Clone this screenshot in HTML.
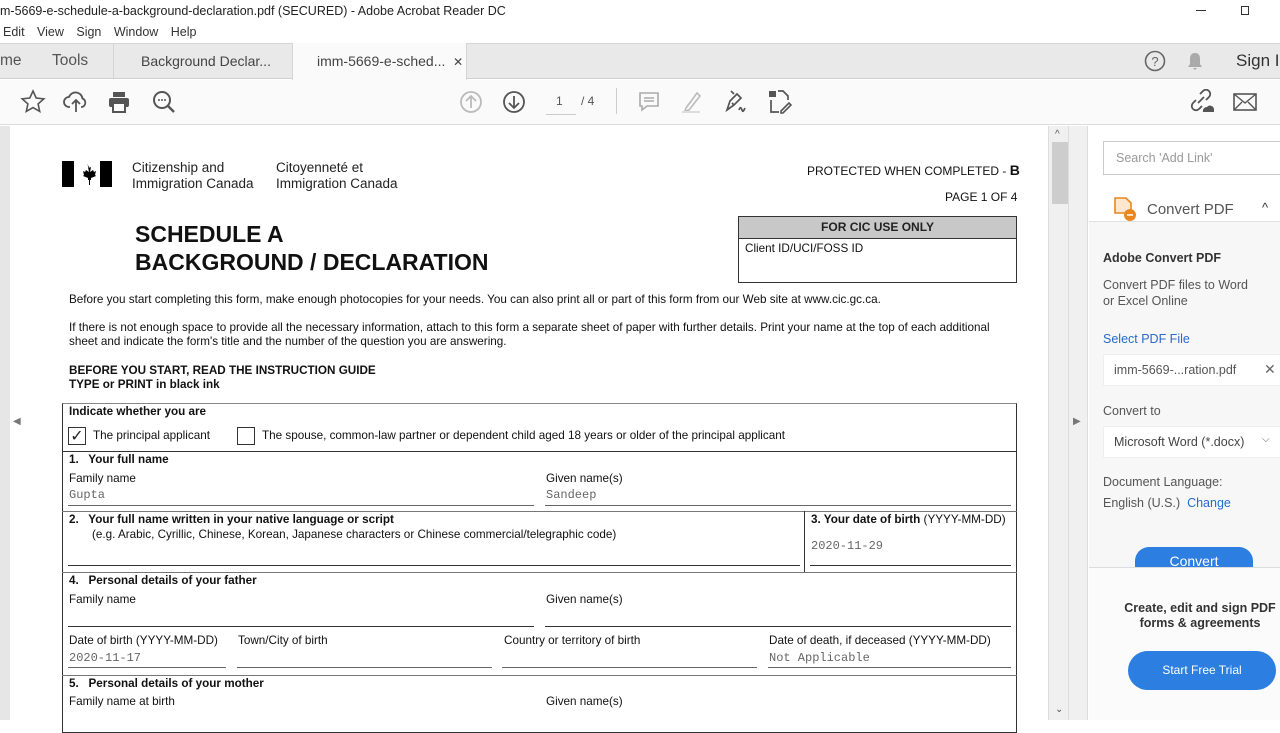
<!DOCTYPE html>
<html><head><meta charset="utf-8"><style>
*{margin:0;padding:0;box-sizing:border-box}
body{width:1280px;height:720px;overflow:hidden;position:relative;background:#fff;font-family:"Liberation Sans",Arial,sans-serif;color:#222}
.a{position:absolute;white-space:nowrap}
.ui{font-family:"Liberation Sans",sans-serif}
.f{font-size:11.7px;color:#111}
.m{font-family:"Liberation Mono",monospace;font-size:12px;color:#666}
.hl{position:absolute;height:1px;background:#333}
.vl{position:absolute;width:1px;background:#333}
.b{font-weight:bold}
</style></head><body>
<div class="a ui" style="left:0;top:4px;font-size:12.5px;color:#222">m-5669-e-schedule-a-background-declaration.pdf (SECURED) - Adobe Acrobat Reader DC</div>
<div class="a" style="left:1196px;top:10px;width:10px;height:1px;background:#333"></div>
<div class="a" style="left:1241px;top:6px;width:8px;height:9px;border:1px solid #333"></div>
<div class="a ui" style="left:3px;top:25px;font-size:12.5px;color:#333;word-spacing:9px">Edit View Sign Window Help</div>
<div class="a" style="left:0;top:43px;width:1280px;height:36px;background:#e9e9e9;border-top:1px solid #d6d6d6;border-bottom:1px solid #d0d0d0"></div>
<div class="a" style="left:113px;top:43px;width:1px;height:36px;background:#d4d4d4"></div>
<div class="a" style="left:292px;top:43px;width:175px;height:37px;background:#fafafa;border-left:1px solid #d4d4d4;border-right:1px solid #d4d4d4"></div>
<div class="a ui" style="left:0;top:52px;font-size:15.5px;color:#555">me</div>
<div class="a ui" style="left:52px;top:52px;font-size:15.5px;color:#555">Tools</div>
<div class="a ui" style="left:141px;top:53px;font-size:14px;color:#444">Background Declar...</div>
<div class="a ui" style="left:317px;top:53px;font-size:14px;color:#444">imm-5669-e-sched...&nbsp;&nbsp;<span style="font-size:12px">✕</span></div>
<svg class="a" style="left:1144px;top:50px" width="22" height="22"><circle cx="11" cy="11" r="9.5" fill="none" stroke="#666" stroke-width="1.6"/><text x="11" y="16" text-anchor="middle" font-size="13" fill="#666" font-family="Liberation Sans">?</text></svg>
<svg class="a" style="left:1186px;top:51px" width="18" height="20"><path d="M9 2c-4 0-5 3-5 6v5l-2 3h14l-2-3V8c0-3-1-6-5-6zM7 17h4l-2 2z" fill="#aaa"/></svg>
<div class="a ui" style="left:1236px;top:51px;font-size:17px;color:#333">Sign I</div>
<div class="a" style="left:0;top:80px;width:1280px;height:45px;background:#fafafa;border-bottom:1px solid #ddd"></div>
<svg class="a" style="left:20px;top:89px" width="26" height="26"><path d="M13 2l3.2 7 7.6.8-5.7 5.1 1.6 7.5L13 18.6l-6.7 3.8 1.6-7.5L2.2 9.8l7.6-.8z" fill="none" stroke="#555" stroke-width="1.6"/></svg>
<svg class="a" style="left:63px;top:89px" width="26" height="26"><path d="M7 18H6a5 5 0 010-10 7 7 0 0113.5 1.5A4.5 4.5 0 0119 18h-1M13 23V11M9 15l4-4 4 4" fill="none" stroke="#555" stroke-width="1.8"/></svg>
<svg class="a" style="left:107px;top:90px" width="24" height="24"><rect x="6" y="2" width="12" height="5" fill="#555"/><rect x="2" y="8" width="20" height="9" rx="2" fill="#555"/><rect x="6" y="13" width="12" height="9" fill="#fff" stroke="#555" stroke-width="2"/></svg>
<svg class="a" style="left:151px;top:89px" width="26" height="26"><circle cx="11" cy="11" r="8" fill="none" stroke="#555" stroke-width="2"/><path d="M17 17l6 6" stroke="#555" stroke-width="2.4"/><circle cx="8" cy="11" r="1" fill="#555"/><circle cx="11" cy="11" r="1" fill="#555"/><circle cx="14" cy="11" r="1" fill="#555"/></svg>
<svg class="a" style="left:459px;top:90px" width="24" height="24"><circle cx="12" cy="12" r="10" fill="none" stroke="#bbb" stroke-width="1.8"/><path d="M12 18V6M7 11l5-5 5 5" fill="none" stroke="#bbb" stroke-width="1.8"/></svg>
<svg class="a" style="left:502px;top:90px" width="24" height="24"><circle cx="12" cy="12" r="10" fill="none" stroke="#555" stroke-width="1.8"/><path d="M12 6v12M7 13l5 5 5-5" fill="none" stroke="#555" stroke-width="1.8"/></svg>
<div class="a ui" style="left:556px;top:94px;font-size:12px;color:#555">1</div>
<div class="a" style="left:546px;top:114px;width:30px;height:1px;background:#ccc"></div>
<div class="a ui" style="left:581px;top:94px;font-size:12px;color:#555">/ 4</div>
<div class="a" style="left:616px;top:88px;width:1px;height:26px;background:#ccc"></div>
<svg class="a" style="left:638px;top:91px" width="22" height="22"><path d="M2 2h18v13H9l-5 4v-4H2z M6 7h10M6 10h10" fill="none" stroke="#aaa" stroke-width="1.6"/></svg>
<svg class="a" style="left:680px;top:90px" width="24" height="24"><path d="M6 18L17 3l3 3-11 14-4 1z" fill="none" stroke="#bbb" stroke-width="1.6"/><rect x="2" y="21" width="18" height="2" fill="#ddd"/></svg>
<svg class="a" style="left:723px;top:90px" width="26" height="24"><path d="M4 20l3-9 7-7 4 4-7 7zM11 4l-3-3M9 13l2 2M16 20c1-3 2-3 3 0s2 0 3-2" fill="none" stroke="#555" stroke-width="1.7"/></svg>
<svg class="a" style="left:767px;top:89px" width="26" height="26"><rect x="2" y="2" width="7" height="6" fill="#555"/><path d="M11 2h5l5 5v4M4 11v12h8M6 5h3" fill="none" stroke="#555" stroke-width="1.7"/><path d="M14 22l8-8 2 2-8 8h-2z" fill="none" stroke="#555" stroke-width="1.6"/></svg>
<svg class="a" style="left:1188px;top:89px" width="28" height="26"><path d="M10 14l6-6M8 11l-3 3a4 4 0 006 6l3-3M18 11l3-3a4 4 0 00-6-6l-3 3" fill="none" stroke="#555" stroke-width="1.8"/><path d="M15 23a4 4 0 014-5 4 4 0 017 3v2z" fill="#555"/></svg>
<svg class="a" style="left:1233px;top:92px" width="24" height="20"><rect x="1" y="2" width="22" height="16" fill="none" stroke="#555" stroke-width="1.6"/><path d="M1 2l11 9 11-9M1 18l8-8M23 18l-8-8" fill="none" stroke="#555" stroke-width="1.4"/></svg>
<div class="a" style="left:0;top:126px;width:10px;height:594px;background:#e6e6e6"></div>
<div class="a" style="left:10px;top:126px;width:1038px;height:594px;background:#fff"></div>
<div class="a" style="left:1048px;top:126px;width:40px;height:594px;background:#f0f0f0;border-left:1px solid #ddd;border-right:1px solid #ddd"></div>
<div class="a" style="left:1052px;top:142px;width:16px;height:62px;background:#cdcdcd"></div>
<div class="a" style="left:1068px;top:126px;width:1px;height:594px;background:#ddd"></div>
<div class="a" style="left:1055px;top:129px;font-size:10px;color:#555">^</div>
<div class="a" style="left:1055px;top:704px;font-size:10px;color:#555">⌄</div>
<div class="a" style="left:1073px;top:416px;font-size:10px;color:#777">▶</div>
<div class="a" style="left:13px;top:416px;font-size:10px;color:#777">◀</div>
<div class="a" style="left:1089px;top:126px;width:191px;height:594px;background:#f7f7f7"></div>
<div class="a" style="left:1089px;top:126px;width:191px;height:96px;background:#fff;border-bottom:1px solid #e0e0e0"></div>
<div class="a ui" style="left:1103px;top:141px;width:190px;height:34px;border:1px solid #ccc;background:#fff;font-size:12.5px;color:#999;padding:9px 12px">Search 'Add Link'</div>
<svg class="a" style="left:1112px;top:196px" width="26" height="26"><path d="M3 2h11l5 5v10H3z" fill="#fde7cf" stroke="#e8861f" stroke-width="1.6"/><circle cx="18" cy="19" r="6" fill="#e8861f"/><path d="M15 19h6" stroke="#fff" stroke-width="1.5"/></svg>
<div class="a ui" style="left:1147px;top:201px;font-size:15px;color:#555">Convert PDF</div>
<div class="a ui" style="left:1262px;top:200px;font-size:13px;color:#333">^</div>
<div class="a ui b" style="left:1103px;top:251px;font-size:12.5px;color:#333">Adobe Convert PDF</div>
<div class="a ui" style="left:1103px;top:277px;font-size:12.5px;color:#555;line-height:16px">Convert PDF files to Word<br>or Excel Online</div>
<div class="a ui" style="left:1103px;top:332px;font-size:12.5px;color:#2a6ac8">Select PDF File</div>
<div class="a ui" style="left:1103px;top:354px;width:180px;height:32px;background:#fff;border:1px solid #eee;font-size:12.5px;color:#555;padding:8px 10px">imm-5669-...ration.pdf</div>
<div class="a" style="left:1264px;top:361px;font-size:14px;color:#666">✕</div>
<div class="a ui" style="left:1103px;top:404px;font-size:12.5px;color:#555">Convert to</div>
<div class="a ui" style="left:1103px;top:426px;width:180px;height:32px;background:#fff;border:1px solid #eee;font-size:12.5px;color:#444;padding:8px 10px">Microsoft Word (*.docx)</div>
<div class="a ui" style="left:1262px;top:434px;font-size:10px;color:#666">⌵</div>
<div class="a ui" style="left:1103px;top:472px;font-size:12.5px;color:#555;line-height:21px">Document Language:<br>English (U.S.)&nbsp; <span style="color:#2a6ac8">Change</span></div>
<div class="a ui" style="left:1135px;top:547px;width:118px;height:20px;background:#2c7ee0;border-radius:14px 14px 0 0;color:#fff;font-size:14px;text-align:center;padding-top:6px;overflow:hidden">Convert</div>
<div class="a" style="left:1089px;top:567px;width:191px;height:153px;background:#fbfbfb;border-top:1px solid #ddd"></div>
<div class="a ui b" style="left:1112px;top:601px;width:176px;font-size:12.5px;color:#333;text-align:center;line-height:15px;white-space:normal">Create, edit and sign PDF forms &amp; agreements</div>
<div class="a ui" style="left:1128px;top:651px;width:148px;height:39px;background:#2c7ee0;border-radius:20px;color:#fff;font-size:12px;text-align:center;line-height:39px">Start Free Trial</div>
<div class="a" style="left:62px;top:161px;width:12px;height:26px;background:#000"></div>
<div class="a" style="left:100px;top:161px;width:12px;height:26px;background:#000"></div>
<svg class="a" style="left:77px;top:163px" width="20" height="22"><path d="M10 1l2 4 2-1-1 5 3-2 1 2 2-1-1 4 1 1-5 2v2h-1v5h-1v-5h-1v-2l-5-2 1-1-1-4 2 1 1-2 3 2-1-5 2 1z" fill="#000"/></svg>
<div class="a" style="left:132px;top:160px;font-size:13.5px;color:#222;line-height:16px">Citizenship and<br>Immigration Canada</div>
<div class="a" style="left:276px;top:160px;font-size:13.5px;color:#222;line-height:16px">Citoyenneté et<br>Immigration Canada</div>
<div class="a" style="left:807px;top:162px;font-size:12px;color:#111">PROTECTED WHEN COMPLETED - <b style="font-size:14px">B</b></div>
<div class="a" style="left:945px;top:190px;font-size:12px;color:#111">PAGE 1 OF 4</div>
<div class="a b" style="left:135px;top:220px;font-size:23px;line-height:28px;color:#111">SCHEDULE A<br>BACKGROUND / DECLARATION</div>
<div class="a" style="left:738px;top:216px;width:279px;height:67px;border:1px solid #333"></div>
<div class="a b" style="left:739px;top:217px;width:277px;height:22px;background:#c8c8c8;border-bottom:1px solid #333;font-size:12px;text-align:center;line-height:21px">FOR CIC USE ONLY</div>
<div class="a f" style="left:745px;top:242px">Client ID/UCI/FOSS ID</div>
<div class="a f" style="left:69px;top:293px">Before you start completing this form, make enough photocopies for your needs. You can also print all or part of this form from our Web site at www.cic.gc.ca.</div>
<div class="a f" style="left:69px;top:321px;line-height:14px">If there is not enough space to provide all the necessary information, attach to this form a separate sheet of paper with further details. Print your name at the top of each additional<br>sheet and indicate the form's title and the number of the question you are answering.</div>
<div class="a f b" style="left:69px;top:364px;line-height:14px">BEFORE YOU START, READ THE INSTRUCTION GUIDE<br>TYPE or PRINT in black ink</div>
<div class="a" style="left:62px;top:403px;width:955px;height:330px;border:1px solid #333;border-top-color:#888"></div>
<div class="a f b" style="left:69px;top:405px">Indicate whether you are</div>
<div class="a" style="left:68px;top:427px;width:18px;height:18px;border:1px solid #333;font-size:16px;line-height:18px;text-align:center">✓</div>
<div class="a f" style="left:93px;top:429px">The principal applicant</div>
<div class="a" style="left:237px;top:427px;width:18px;height:18px;border:1px solid #333"></div>
<div class="a f" style="left:262px;top:429px">The spouse, common-law partner or dependent child aged 18 years or older of the principal applicant</div>
<div class="hl" style="left:62px;top:451px;width:955px"></div>
<div class="a f b" style="left:69px;top:453px">1.&nbsp;&nbsp; Your full name</div>
<div class="a f" style="left:69px;top:472px">Family name</div>
<div class="a m" style="left:69px;top:488px">Gupta</div>
<div class="a f" style="left:546px;top:472px">Given name(s)</div>
<div class="a m" style="left:546px;top:488px">Sandeep</div>
<div class="hl" style="left:68px;top:505px;width:466px;background:#666"></div>
<div class="hl" style="left:545px;top:505px;width:466px;background:#666"></div>
<div class="hl" style="left:62px;top:511px;width:955px;background:#777"></div>
<div class="a f b" style="left:69px;top:513px">2.&nbsp;&nbsp; Your full name written in your native language or script</div>
<div class="a f" style="left:92px;top:528px">(e.g. Arabic, Cyrillic, Chinese, Korean, Japanese characters or Chinese commercial/telegraphic code)</div>
<div class="vl" style="left:804px;top:511px;height:61px"></div>
<div class="a f" style="left:811px;top:513px"><b>3. Your date of birth</b> (YYYY-MM-DD)</div>
<div class="a m" style="left:811px;top:539px">2020-11-29</div>
<div class="hl" style="left:68px;top:565px;width:732px"></div>
<div class="hl" style="left:810px;top:565px;width:201px"></div>
<div class="hl" style="left:62px;top:572px;width:955px;background:#777"></div>
<div class="a f b" style="left:69px;top:574px">4.&nbsp;&nbsp; Personal details of your father</div>
<div class="a f" style="left:69px;top:593px">Family name</div>
<div class="a f" style="left:546px;top:593px">Given name(s)</div>
<div class="hl" style="left:68px;top:626px;width:466px"></div>
<div class="hl" style="left:545px;top:626px;width:466px"></div>
<div class="a f" style="left:69px;top:634px">Date of birth (YYYY-MM-DD)</div>
<div class="a m" style="left:69px;top:651px">2020-11-17</div>
<div class="a f" style="left:238px;top:634px">Town/City of birth</div>
<div class="a f" style="left:504px;top:634px">Country or territory of birth</div>
<div class="a f" style="left:769px;top:634px">Date of death, if deceased (YYYY-MM-DD)</div>
<div class="a m" style="left:769px;top:651px">Not Applicable</div>
<div class="hl" style="left:68px;top:667px;width:158px;background:#666"></div>
<div class="hl" style="left:237px;top:667px;width:255px;background:#666"></div>
<div class="hl" style="left:502px;top:667px;width:255px;background:#666"></div>
<div class="hl" style="left:768px;top:667px;width:243px;background:#666"></div>
<div class="hl" style="left:62px;top:675px;width:955px;background:#777"></div>
<div class="a f b" style="left:69px;top:677px">5.&nbsp;&nbsp; Personal details of your mother</div>
<div class="a f" style="left:69px;top:695px">Family name at birth</div>
<div class="a f" style="left:546px;top:695px">Given name(s)</div>
</body></html>
